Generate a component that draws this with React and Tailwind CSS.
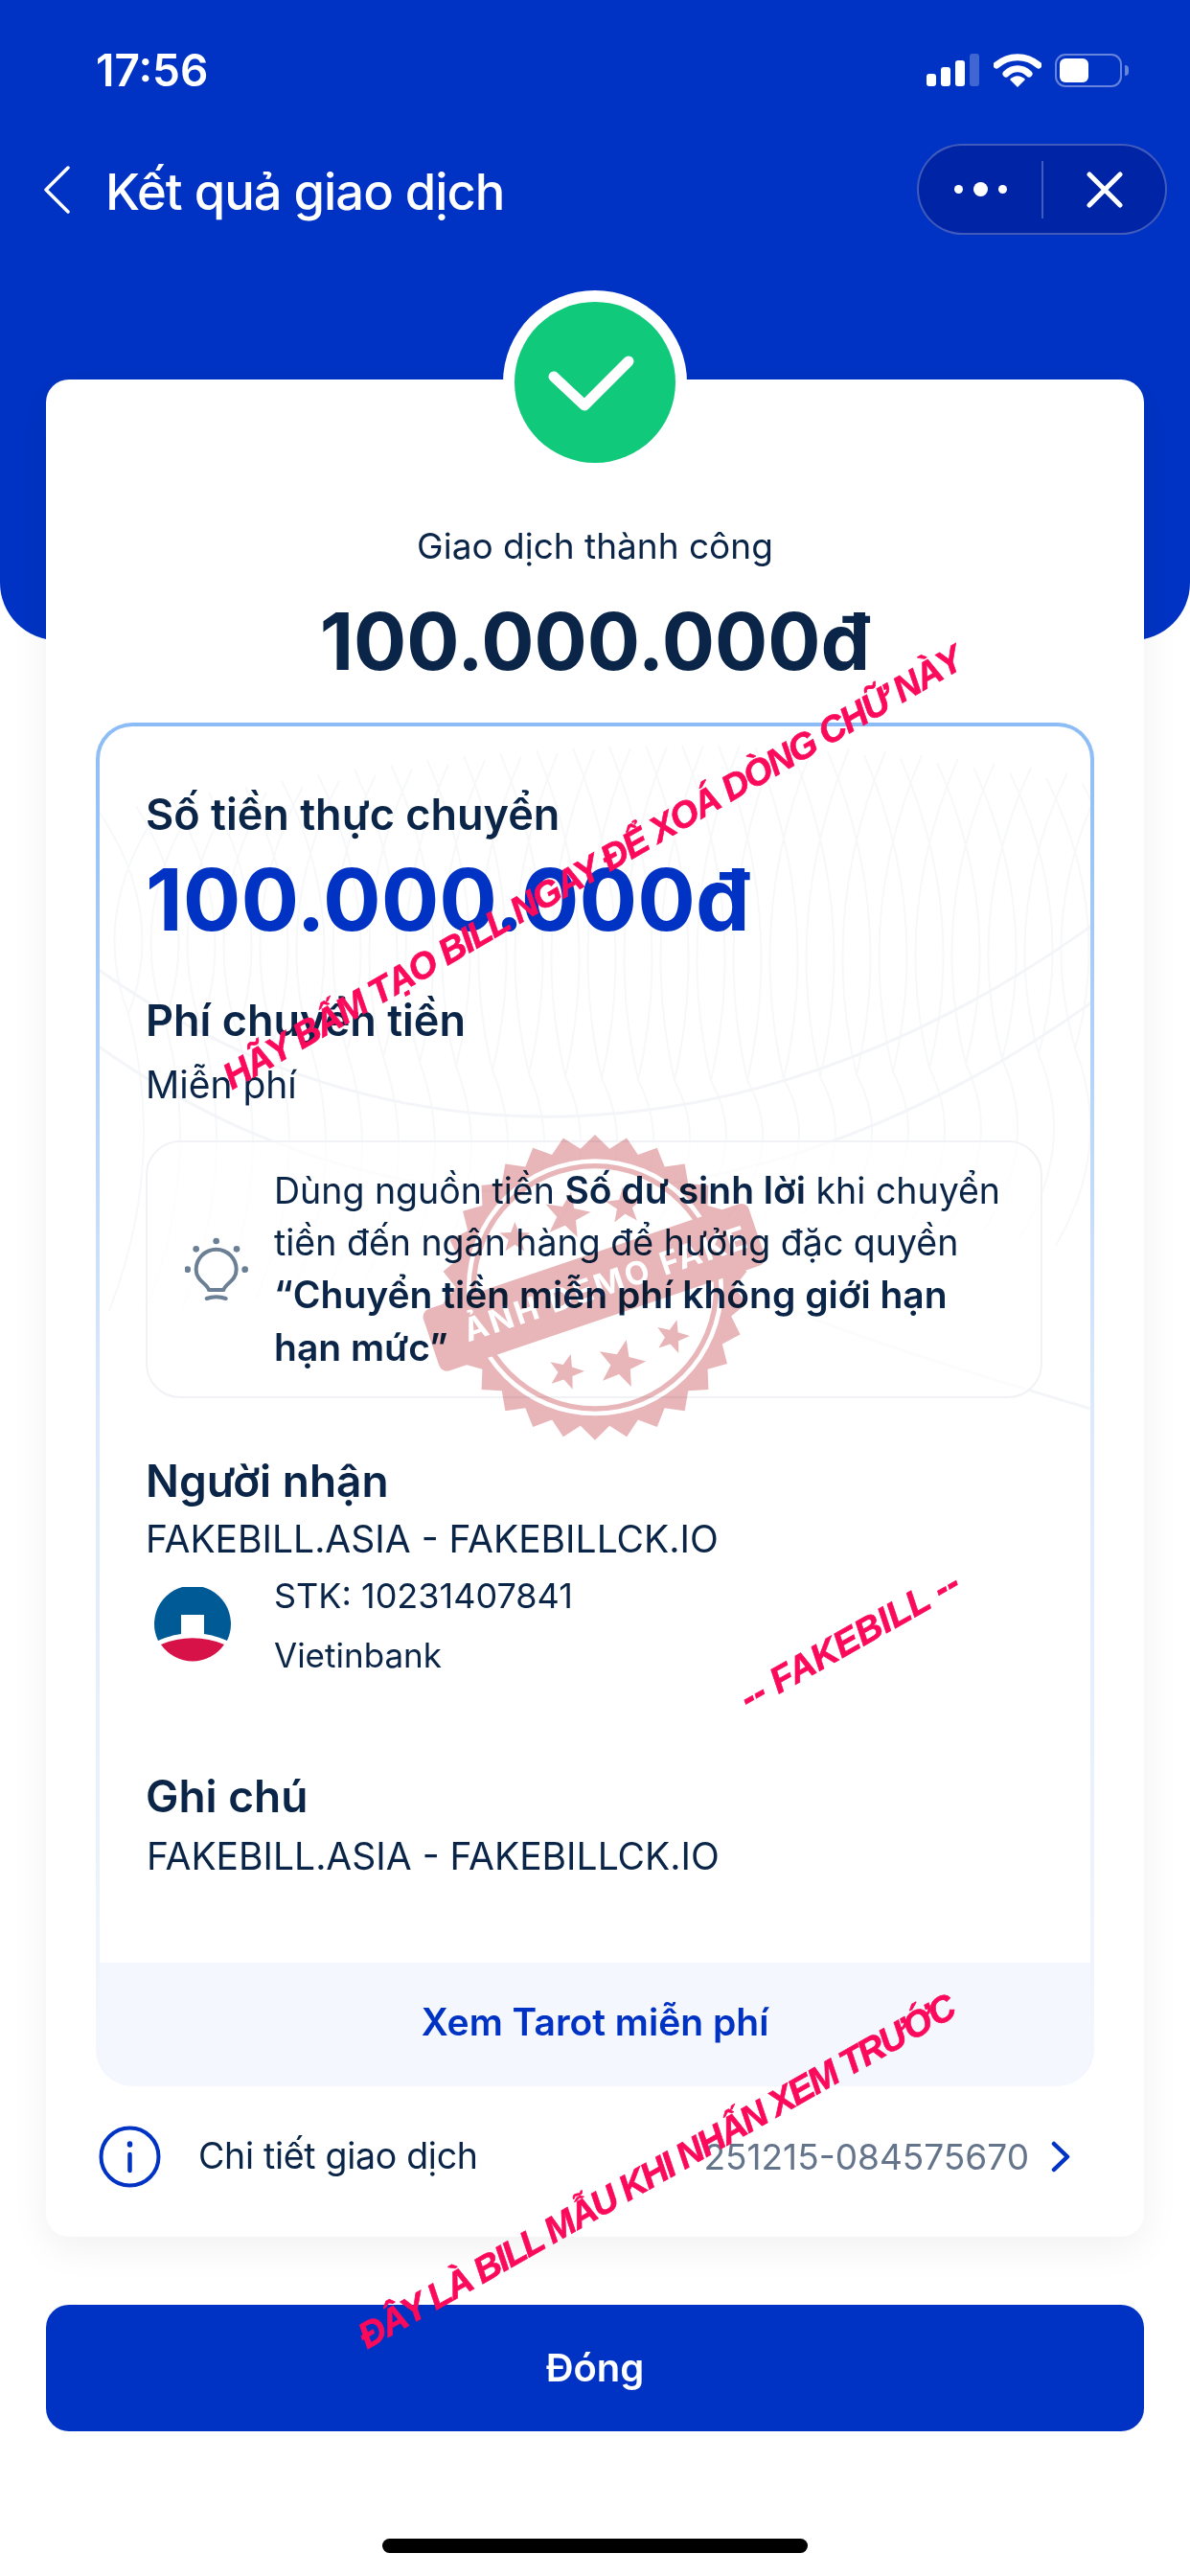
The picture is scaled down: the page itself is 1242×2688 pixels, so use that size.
import React from "react";

function SignalIcon() {
  return (
    <svg width="56" height="34" viewBox="0 0 56 34">
      <rect x="0" y="21" width="10" height="13" rx="3" fill="#fff" />
      <rect x="15" y="14" width="10" height="20" rx="3" fill="#fff" />
      <rect x="30" y="7" width="10" height="27" rx="3" fill="#fff" />
      <rect x="45" y="0" width="10" height="34" rx="3" fill="#fff" fillOpacity="0.25" />
    </svg>
  );
}

function WifiIcon() {
  return (
    <svg width="50" height="36" viewBox="0 0 50 36" fill="none">
      <path d="M3 13 C16 2 34 2 47 13" stroke="#fff" strokeWidth="7" strokeLinecap="round" />
      <path d="M13 22 C20 15 30 15 37 22" stroke="#fff" strokeWidth="7" strokeLinecap="round" />
      <path d="M17 28 C22 23 28 23 33 28 L25 36 Z" fill="#fff" />
    </svg>
  );
}

function BatteryIcon() {
  return (
    <div className="flex items-center gap-[3px]">
      <div className="w-[70px] h-[35px] rounded-[11px] border-[2px] border-white/40 p-[3px]">
        <div className="w-[30px] h-full rounded-[6px] bg-white" />
      </div>
      <div className="w-[4px] h-[11px] rounded-r-full bg-white/40" />
    </div>
  );
}

function BulbIcon() {
  return (
    <svg width="66" height="80" viewBox="130 150 198 240" fill="none" stroke="#6b7f95" strokeLinecap="round" strokeLinejoin="round">
      <path d="M205 318 C200 298 165 290 165 254 A63 63 0 0 1 291 254 C291 290 256 298 251 318 Z" strokeWidth="12" />
      <path d="M198 345 Q228 335 258 345" strokeWidth="12" />
      <g fill="#6b7f95" stroke="none">
        <circle cx="228" cy="165" r="10" />
        <circle cx="165" cy="190" r="10" />
        <circle cx="292" cy="190" r="10" />
        <circle cx="138" cy="254" r="10" />
        <circle cx="318" cy="254" r="10" />
      </g>
    </svg>
  );
}

function BankLogo() {
  return (
    <svg width="80" height="80" viewBox="0 0 80 80">
      <path d="M4 56 A40 40 0 1 1 76 56 C66 52 60 50 52 49 V29 H28 V49 C20 50 14 52 4 56 Z" fill="#005a96" />
      <path d="M7 60 C28 51 52 51 73 60 A40 40 0 0 1 7 60 Z" fill="#d71249" />
    </svg>
  );
}

function Guilloche() {
  const lines = [];
  for (let i = 0; i < 30; i++) {
    const x = i * 38;
    const top = 90 - Math.sin(i / 10) * 70;
    const mid = 300 + Math.sin(i / 10) * 70;
    const bottom = 560 + Math.cos(i / 6) * 50;
    lines.push(`M${x} ${top} Q${x + 70} ${(top + mid) / 2} ${x + 30} ${mid}`);
    lines.push(`M${x + 60} ${top} Q${x - 10} ${(top + mid) / 2} ${x + 30} ${mid}`);
    lines.push(`M${x + 30} ${mid} Q${x + 70} ${(mid + bottom) / 2} ${x + 10} ${bottom}`);
  }
  return (
    <svg className="absolute left-0 top-0" width="1036" height="760" viewBox="0 0 1036 760" fill="none" stroke="#f7f8fa" strokeWidth="2">
      <path d={lines.join(" ")} />
      <path d="M-20 240 C300 480 700 460 1060 190" stroke="#f4f5f8" strokeWidth="3" />
      <path d="M-20 320 C300 560 700 540 1060 270" stroke="#f4f5f8" strokeWidth="3" />
      <path d="M700 600 C820 650 930 680 1060 720" stroke="#f4f5f8" strokeWidth="3" />
    </svg>
  );
}

function starPoints(cx, cy, r, rot) {
  const pts = [];
  for (let i = 0; i < 10; i++) {
    const a = (rot + i * 36 - 90) * (Math.PI / 180);
    const rad = i % 2 === 0 ? r : r * 0.42;
    pts.push(`${cx + Math.cos(a) * rad},${cy + Math.sin(a) * rad}`);
  }
  return pts.join(" ");
}

function burstPoints(cx, cy, outer, inner, n) {
  const pts = [];
  for (let i = 0; i < n * 2; i++) {
    const a = (i * 180) / n * (Math.PI / 180) - Math.PI / 2;
    const rad = i % 2 === 0 ? outer : inner;
    pts.push(`${cx + Math.cos(a) * rad},${cy + Math.sin(a) * rad}`);
  }
  return pts.join(" ");
}

// stamp drawn in the coordinates of a 3x crop, so it maps straight onto the picture
function Stamp() {
  return (
    <svg className="absolute left-[420px] top-[1160px] mix-blend-multiply" width="400" height="360" viewBox="0 0 1200 1080">
      <polygon points={burstPoints(603, 550, 478, 436, 30)} fill="#e8b5b8" />
      <circle cx="603" cy="550" r="402" fill="#fff" />
      <circle cx="603" cy="550" r="388" fill="#e8b5b8" />
      <circle cx="603" cy="550" r="372" fill="#fff" />
      <g fill="#e8b5b8">
        <polygon points={starPoints(515, 325, 75, 10)} />
        <polygon points={starPoints(695, 295, 60, -5)} />
        <polygon points={starPoints(352, 395, 50, 0)} />
        <polygon points={starPoints(512, 815, 58, 15)} />
        <polygon points={starPoints(685, 790, 78, 12)} />
        <polygon points={starPoints(845, 705, 55, 15)} />
      </g>
      <g transform="rotate(-18.7 600 550)">
        <rect x="62" y="448" width="1076" height="204" rx="26" fill="#e8b5b8" />
        <text x="640" y="586" textAnchor="middle" fontFamily="Inter, sans-serif" fontWeight="700" fontSize="100" letterSpacing="8" fill="#fff">
          ẢNH DEMO FAKE
        </text>
      </g>
    </svg>
  );
}

function Watermark({ className, children }) {
  return (
    <div className={`absolute origin-left whitespace-nowrap font-['Liberation_Sans',sans-serif] font-bold italic text-[#fb0a5c] [-webkit-text-stroke:0.7px_#fb0a5c] ${className}`}>
      {children}
    </div>
  );
}

export default function App() {
  return (
    <div className="relative w-[1242px] h-[2688px] overflow-hidden bg-white font-['Inter',sans-serif] text-[#0a2547]">
      <header className="h-[668px] rounded-b-[60px] bg-[#0033c4] pt-[46px] text-white">
        <div className="flex h-[54px] items-center justify-between pl-[100px] pr-[64px]">
          <span className="text-[46px] font-semibold leading-[54px]">17:56</span>
          <div className="flex items-center gap-[14px]">
            <SignalIcon />
            <WifiIcon />
            <BatteryIcon />
          </div>
        </div>
        <div className="mt-[50px] flex h-[95px] items-center justify-between pl-[45px] pr-[24px]">
          <div className="flex items-center gap-[37px]">
            <svg width="28" height="50" viewBox="0 0 28 50" fill="none" stroke="#fff" strokeWidth="3.5" strokeLinecap="round" strokeLinejoin="round">
              <path d="M26 2 L3 25 L26 48" />
            </svg>
            <h1 className="pt-[5px] text-[52.5px] font-medium leading-[64px] tracking-[-1px]">Kết quả giao dịch</h1>
          </div>
          <div className="flex h-[95px] w-[261px] items-center rounded-full border-[2px] border-white/25 bg-[#0024a6]">
            <div className="flex w-[128px] items-center justify-center gap-[11px]">
              <span className="size-[9px] rounded-full bg-white" />
              <span className="size-[15px] rounded-full bg-white" />
              <span className="size-[9px] rounded-full bg-white" />
            </div>
            <div className="h-[60px] w-[2px] bg-white/25" />
            <div className="flex flex-1 items-center justify-center">
              <svg width="38" height="38" viewBox="0 0 38 38" stroke="#fff" strokeWidth="5" strokeLinecap="round">
                <path d="M3 3 L35 35 M35 3 L3 35" />
              </svg>
            </div>
          </div>
        </div>
      </header>

      <main className="relative mx-[48px] mt-[-272px] rounded-[24px] bg-white pt-[149px] pb-[51px] shadow-[0_12px_40px_rgba(15,23,42,0.06)]">
        <div className="absolute left-1/2 top-[-93px] flex size-[192px] -translate-x-1/2 items-center justify-center rounded-full bg-white">
          <div className="flex size-[168px] items-center justify-center rounded-full bg-[#10c97a]">
            <svg width="100" height="80" viewBox="0 0 100 80" fill="none" stroke="#fff" strokeWidth="11" strokeLinecap="round" strokeLinejoin="round">
              <path d="M7 34 L39 64 L85 18" />
            </svg>
          </div>
        </div>

        <p className="text-center text-[37px] leading-[50px]">Giao dịch thành công</p>
        <p className="mt-[25px] text-center text-[82px] font-bold leading-[100px]">100.000.000đ</p>

        <div className="mx-[52px] mt-[34px] rounded-[38px] bg-gradient-to-b from-[#8cbcf6] via-[#dce9fb] to-[#f4f7fd] p-[4px]">
          <div className="relative overflow-hidden rounded-[34px] bg-white">
            <Guilloche />
            <div className="relative pl-[48px] pr-[50px] pt-[64px]">
              <h2 className="text-[45px] font-semibold leading-[56px]">Số tiền thực chuyển</h2>
              <p className="mt-[11px] text-[90px] font-bold leading-[100px] text-[#0033c4]">100.000.000đ</p>
              <h2 className="mt-[48px] text-[45px] font-semibold leading-[56px]">Phí chuyển tiền</h2>
              <p className="mt-[14px] text-[39px] leading-[50px]">Miễn phí</p>

              <div className="mt-[33px] flex h-[269px] items-center rounded-[36px] border-[2px] border-[#f1f2f5] bg-white/70">
                <div className="flex w-[132px] shrink-0 justify-center pl-[12px] pt-[11px]">
                  <BulbIcon />
                </div>
                <p className="text-[37.5px] leading-[54px]">
                  Dùng nguồn tiền <b className="text-[39px] font-semibold">Số dư sinh lời</b> khi chuyển
                  <br />
                  tiền đến ngân hàng để hưởng đặc quyền
                  <br />
                  <b className="text-[39px] font-semibold">“Chuyển tiền miễn phí không giới hạn
                  <br />
                  hạn mức”</b>
                </p>
              </div>

              <h2 className="mt-[58px] text-[46px] font-semibold leading-[56px]">Người nhận</h2>
              <p className="mt-[8px] text-[39px] leading-[50px]">FAKEBILL.ASIA - FAKEBILLCK.IO</p>
              <div className="mt-[3px] flex items-center">
                <div className="w-[134px] pl-[9px]">
                  <BankLogo />
                </div>
                <div className="text-[36px] leading-[62px]">
                  <p>STK: 10231407841</p>
                  <p className="text-[35px]">Vietinbank</p>
                </div>
              </div>

              <h2 className="mt-[88px] text-[46px] font-semibold leading-[56px]">Ghi chú</h2>
              <p className="mt-[10px] pl-[1px] text-[39px] leading-[50px]">FAKEBILL.ASIA - FAKEBILLCK.IO</p>
            </div>
            <div className="relative mt-[86px] flex h-[125px] items-center justify-center bg-[#f4f7fe] text-[39px] font-semibold text-[#0033c4]">
              Xem Tarot miễn phí
            </div>
          </div>
        </div>

        <div className="mt-[41px] flex h-[65px] items-center pl-[55px] pr-[77px]">
          <svg width="65" height="65" viewBox="0 0 65 65" fill="none" stroke="#0033c4" strokeLinecap="round">
            <circle cx="32.5" cy="32.5" r="30" strokeWidth="4" />
            <path d="M32.5 30 V47" strokeWidth="4.5" />
            <path d="M32.5 19 V20" strokeWidth="5.5" />
          </svg>
          <span className="ml-[39px] text-[37.5px] tracking-[-0.3px]">Chi tiết giao dịch</span>
          <span className="ml-auto text-[37px] text-[#64748b]">251215-084575670</span>
          <svg className="ml-[23px]" width="20" height="33" viewBox="0 0 20 33" fill="none" stroke="#0033c4" strokeWidth="4.5" strokeLinecap="round" strokeLinejoin="round">
            <path d="M3 3 L17 16.5 L3 30" />
          </svg>
        </div>
      </main>

      <button className="mx-[48px] mt-[71px] flex h-[132px] w-[1146px] items-center justify-center rounded-[24px] bg-[#0033c4] text-[40px] font-semibold text-white">
        Đóng
      </button>
      <div className="mx-auto mt-[112px] h-[15px] w-[444px] rounded-full bg-black" />

      <Stamp />
      <Watermark className="left-[236px] top-[1098px] -rotate-[30deg] text-[38px] tracking-[-1.55px]">HÃY BẤM TẠO BILL NGAY ĐỂ XOÁ DÒNG CHỮ NÀY</Watermark>
      <Watermark className="left-[775px] top-[1746px] -rotate-[29.4deg] text-[38px]">-- FAKEBILL --</Watermark>
      <Watermark className="left-[377px] top-[2412px] -rotate-[29.5deg] text-[38px] tracking-[-1.9px]">ĐÂY LÀ BILL MẪU KHI NHẤN XEM TRƯỚC</Watermark>
    </div>
  );
}
